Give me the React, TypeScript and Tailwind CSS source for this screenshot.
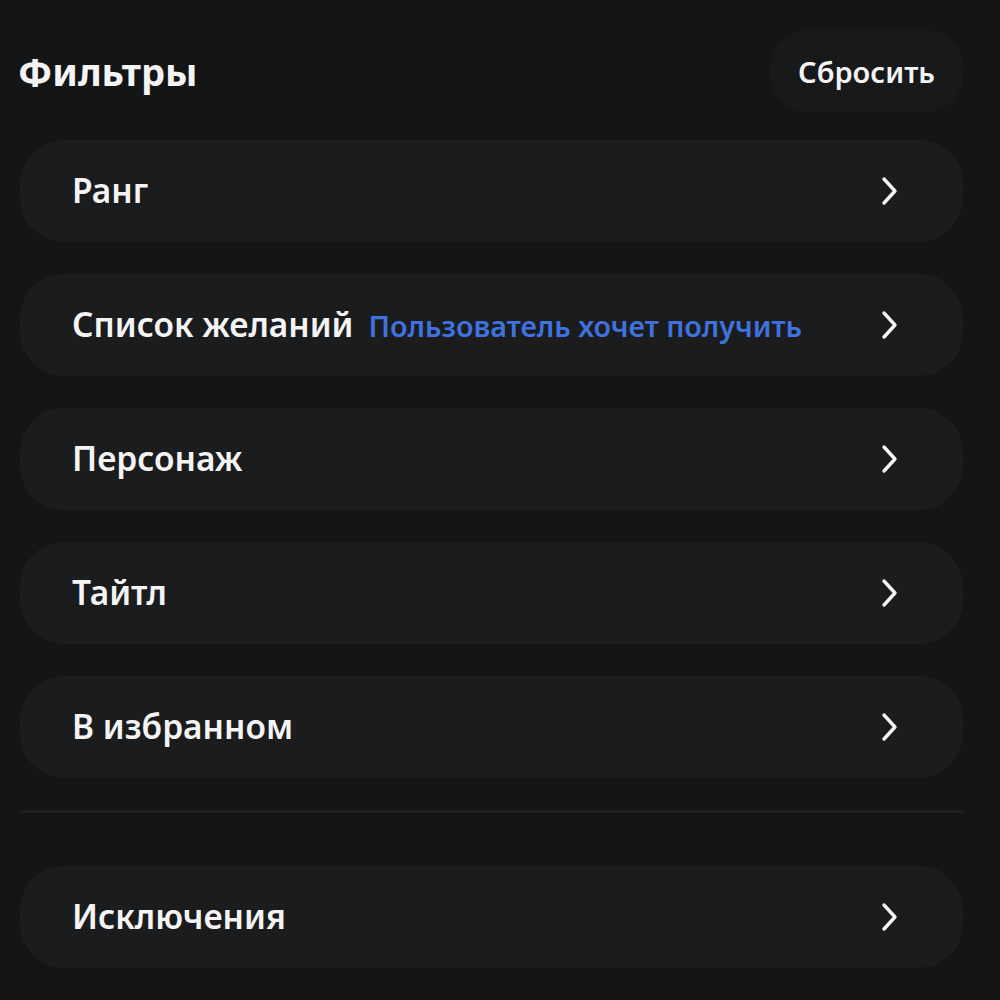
import { ReactNode } from "react";

function Chevron() {
  return (
    <svg width="22" height="34" viewBox="0 0 22 34" fill="none" className="shrink-0">
      <path
        d="M5 5 L16 17 L5 29"
        stroke="#f4f4f5"
        strokeWidth="3.4"
        strokeLinecap="round"
        strokeLinejoin="round"
      />
    </svg>
  );
}

function FilterRow({ label, hint }: { label: string; hint?: ReactNode }) {
  return (
    <button className="flex h-[102px] w-full items-center justify-between rounded-[44px] bg-[#1b1c1e] pl-[52px] pr-[62px] text-left">
      <span className="flex items-baseline gap-[15px] leading-none">
        <span className="text-[33.5px] font-semibold text-[#f4f4f5]">{label}</span>
        {hint && <span className="text-[28.7px] font-semibold text-[#3f72de]">{hint}</span>}
      </span>
      <Chevron />
    </button>
  );
}

const filters = [
  { label: "Ранг" },
  { label: "Список желаний", hint: "Пользователь хочет получить" },
  { label: "Персонаж" },
  { label: "Тайтл" },
  { label: "В избранном" },
];

export default function App() {
  return (
    <div
      className="min-h-[1000px] w-[1000px] bg-[#141517] pl-5 pr-[37px] pt-[30px]"
      style={{ fontFamily: '"Noto Sans", "Open Sans", sans-serif' }}
    >
      {/* Header */}
      <div className="flex items-center justify-between">
        <h1 className="-ml-[2px] text-[38px] font-bold leading-none text-[#f4f4f5]">Фильтры</h1>
        <button className="flex h-[82px] w-[193px] items-center justify-center rounded-[36px] bg-[#18191b] text-[29px] font-semibold leading-none text-[#f4f4f5]">
          Сбросить
        </button>
      </div>

      {/* Filters */}
      <div className="mt-[28px] flex flex-col gap-[32px]">
        {filters.map((f) => (
          <FilterRow key={f.label} label={f.label} hint={f.hint} />
        ))}
      </div>

      <div className="mt-[32px] h-[3px] bg-[#1e1f21]" />

      <div className="mt-[53px]">
        <FilterRow label="Исключения" />
      </div>
    </div>
  );
}
